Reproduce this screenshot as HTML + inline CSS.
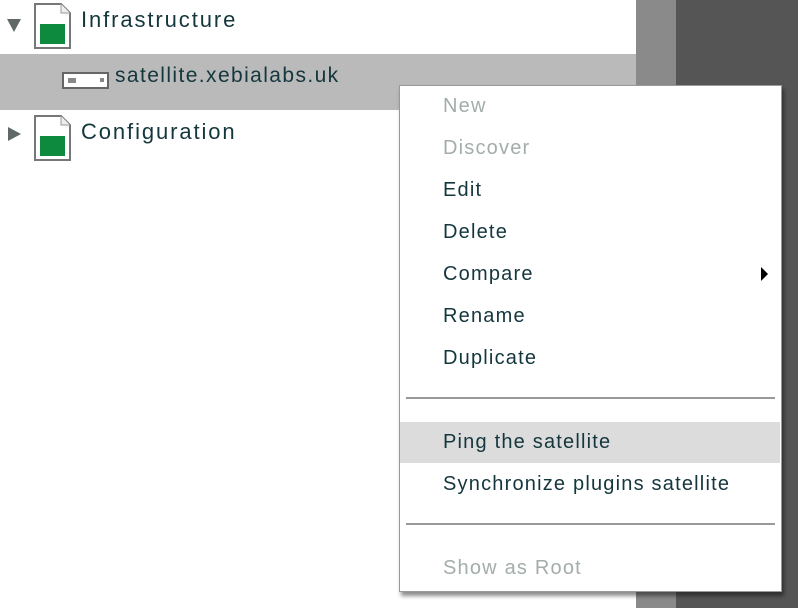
<!DOCTYPE html>
<html><head><style>
body{margin:0;width:798px;height:608px;position:relative;overflow:hidden;background:#fff;font-family:"Liberation Sans",sans-serif;}
.a{position:absolute}
.t{position:absolute;font-size:22px;letter-spacing:1.9px;color:#14363d;white-space:nowrap;line-height:24px}
.m{position:absolute;left:443px;font-size:20px;letter-spacing:1.2px;color:#14363d;line-height:24px;white-space:nowrap}
.d{color:#a3adab}
</style></head><body>
<div class="a" style="left:636px;top:0;width:40px;height:608px;background:#8a8a8a"></div>
<div class="a" style="left:676px;top:0;width:122px;height:608px;background:#555"></div>
<div class="a" style="left:0;top:54px;width:636px;height:56px;background:#bababa"></div>
<div class="a" style="left:7px;top:19px;width:0;height:0;border-left:7px solid transparent;border-right:7px solid transparent;border-top:13px solid #606868"></div>
<svg class="a" style="left:33px;top:2px" width="40" height="48"><path d="M2 2h26l9 9v35H2z" fill="#fff" stroke="#777" stroke-width="2"/><path d="M28 2v9h9" fill="#eee" stroke="#999"/><rect x="7" y="22" width="25" height="20" fill="#0e8a3e"/></svg>
<div class="t" style="left:81px;top:8px">Infrastructure</div>
<svg class="a" style="left:62px;top:72px" width="48" height="18"><rect x="1" y="1" width="45" height="15" fill="#fff" stroke="#666" stroke-width="2"/><rect x="6" y="6" width="8" height="5" fill="#888"/><rect x="38" y="6" width="4" height="4" fill="#888"/></svg>
<div class="t" style="left:115px;top:64px;font-size:21px;letter-spacing:1.4px">satellite.xebialabs.uk</div>
<div class="a" style="left:8px;top:127px;width:0;height:0;border-top:7px solid transparent;border-bottom:7px solid transparent;border-left:13px solid #606868"></div>
<svg class="a" style="left:33px;top:114px" width="40" height="48"><path d="M2 2h26l9 9v35H2z" fill="#fff" stroke="#777" stroke-width="2"/><path d="M28 2v9h9" fill="#eee" stroke="#999"/><rect x="7" y="22" width="25" height="20" fill="#0e8a3e"/></svg>
<div class="t" style="left:81px;top:120px">Configuration</div>
<div class="a" style="left:399px;top:85px;width:381px;height:505px;background:#fff;border:1px solid #999;box-shadow:2px 4px 4px rgba(0,0,0,.45)"></div>
<div class="a" style="left:400px;top:422px;width:380px;height:41px;background:#dcdcdc"></div>
<div class="a" style="left:406px;top:397px;width:369px;height:2px;background:#999"></div>
<div class="a" style="left:406px;top:523px;width:369px;height:2px;background:#999"></div>
<div class="m d" style="top:94px">New</div>
<div class="m d" style="top:136px">Discover</div>
<div class="m" style="top:178px">Edit</div>
<div class="m" style="top:220px">Delete</div>
<div class="m" style="top:262px">Compare</div>
<div class="a" style="left:761px;top:267px;width:0;height:0;border-top:7px solid transparent;border-bottom:7px solid transparent;border-left:7px solid #000"></div>
<div class="m" style="top:304px">Rename</div>
<div class="m" style="top:346px">Duplicate</div>
<div class="m" style="top:430px">Ping the satellite</div>
<div class="m" style="top:472px">Synchronize plugins satellite</div>
<div class="m d" style="top:556px">Show as Root</div>
</body></html>
